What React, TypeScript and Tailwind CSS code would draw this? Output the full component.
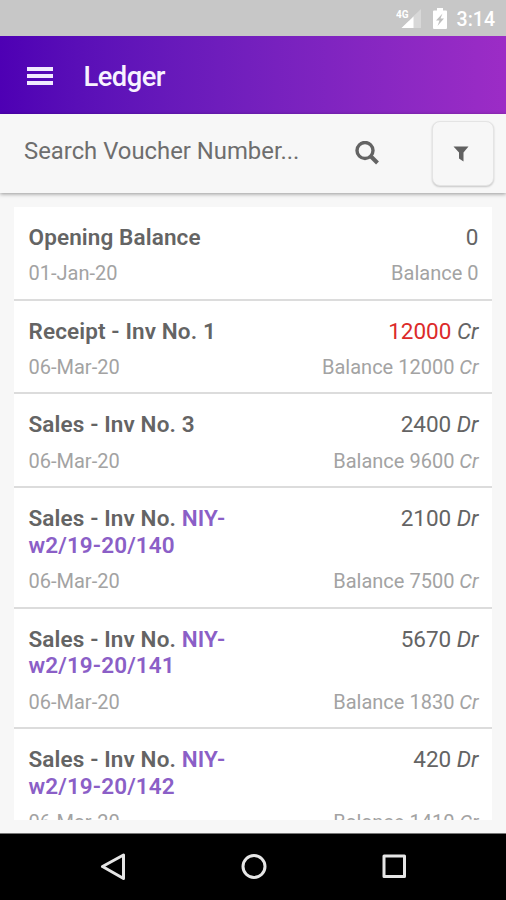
type Entry = {
  title: string;
  voucher?: string;
  date: string;
  amount: string;
  type?: string;
  credit?: boolean;
  balance: string;
  balanceType?: string;
};

const entries: Entry[] = [
  { title: "Opening Balance", date: "01-Jan-20", amount: "0", balance: "0" },
  {
    title: "Receipt - Inv No. 1",
    date: "06-Mar-20",
    amount: "12000",
    type: "Cr",
    credit: true,
    balance: "12000",
    balanceType: "Cr",
  },
  {
    title: "Sales - Inv No. 3",
    date: "06-Mar-20",
    amount: "2400",
    type: "Dr",
    balance: "9600",
    balanceType: "Cr",
  },
  {
    title: "Sales - Inv No.",
    voucher: "NIY-w2/19-20/140",
    date: "06-Mar-20",
    amount: "2100",
    type: "Dr",
    balance: "7500",
    balanceType: "Cr",
  },
  {
    title: "Sales - Inv No.",
    voucher: "NIY-w2/19-20/141",
    date: "06-Mar-20",
    amount: "5670",
    type: "Dr",
    balance: "1830",
    balanceType: "Cr",
  },
  {
    title: "Sales - Inv No.",
    voucher: "NIY-w2/19-20/142",
    date: "06-Mar-20",
    amount: "420",
    type: "Dr",
    balance: "1410",
    balanceType: "Cr",
  },
];

function StatusBar() {
  return (
    <div className="flex h-9 shrink-0 items-center justify-end bg-[#c7c7c7] pt-[2px] pr-[11px] text-white">
      <svg width="26" height="22" viewBox="0 0 26 22" className="mr-[11px]">
        <path d="M25 1v19H5.500l7-7h4V9z" fill="#fff" opacity="0.3" />
        <path d="M17.500 8.500V20H5.500z" fill="#fff" />
        <text x="0" y="9.500" fontSize="10" fontWeight="700" fill="#fff" fontFamily="Roboto, sans-serif">
          4G
        </text>
      </svg>
      <svg width="14" height="22" viewBox="0 0 14 22" className="mr-[10px]">
        <path d="M4 0h6v2.500h3a1 1 0 0 1 1 1V20a1 1 0 0 1-1 1H1a1 1 0 0 1-1-1V3.500a1 1 0 0 1 1-1h3z" fill="#fff" />
        <path d="M9.500 5.500L3 12.500h3.500L4.500 18l6.500-7.500H7.500z" fill="#c0c0c0" />
      </svg>
      <span className="pt-px text-[19.500px] leading-none font-medium">3:14</span>
    </div>
  );
}

function Header() {
  return (
    <header className="flex h-[78px] shrink-0 items-center bg-linear-to-r from-[#4e00b4] to-[#9c2cc6] pl-[27px]">
      <div className="flex w-[26px] flex-col gap-[3px] pt-px">
        <span className="h-[4px] bg-[#f1eaff]" />
        <span className="h-[4px] bg-[#f1eaff]" />
        <span className="h-[4px] bg-[#f1eaff]" />
      </div>
      <h1 className="ml-[30.500px] pt-[4px] text-[27.300px] tracking-[-0.500px] font-medium text-[#f8f2ff]">Ledger</h1>
    </header>
  );
}

function SearchBar() {
  return (
    <div className="z-10 flex h-[79px] shrink-0 items-center bg-[#f7f7f7] pr-[12px] pl-6 shadow-[0_1px_4px_rgba(0,0,0,0.4)]">
      <span className="flex-1 pb-1 text-[23.850px] text-[#6e6e6e]">Search Voucher Number...</span>
      <svg width="24" height="24" viewBox="0 0 24 24" fill="none" className="mr-[53px] mb-[2px]">
        <circle cx="10" cy="9.500" r="8" stroke="#646464" strokeWidth="3.400" />
        <path d="M15.500 15L22.500 22" stroke="#646464" strokeWidth="4" />
      </svg>
      <button className="flex h-[65px] w-[62px] items-center justify-center rounded-[8px] border border-[#e4e4e4] bg-[#f7f7f7] shadow-[0_1px_2px_rgba(0,0,0,0.2)]">
        <svg width="16" height="16" viewBox="0 0 16 16" className="mr-[4px]">
          <path d="M0.500 0.500h15L10.500 6.500v9L6 12.500V6.500z" fill="#616161" />
        </svg>
      </button>
    </div>
  );
}

function LedgerRow({ entry }: { entry: Entry }) {
  return (
    <div className="border-b-2 border-[#dcdcdc] pt-[17px] pr-[13.500px] pb-[13.400px] pl-[14.500px]">
      <div className="flex items-start justify-between text-[22.500px] leading-[26.800px] text-[#646464]">
        <div className="max-w-[230px] font-semibold tracking-[0.120px]">
          {entry.title} {entry.voucher && <span className="text-[#8b5fc7]">{entry.voucher}</span>}
        </div>
        <div>
          <span className={entry.credit ? "text-[#dc2a2a]" : ""}>{entry.amount}</span>
          {entry.type && <i> {entry.type}</i>}
        </div>
      </div>
      <div className="mt-[10.500px] flex justify-between text-[20px] leading-6 text-[#a3a3a3]">
        <span>{entry.date}</span>
        <span>
          Balance {entry.balance}
          {entry.balanceType && <i> {entry.balanceType}</i>}
        </span>
      </div>
    </div>
  );
}

function NavBar() {
  return (
    <nav className="flex h-[67px] shrink-0 items-center justify-between border-t border-[#777777] bg-black pr-[98px] pl-[99px]">
      <svg width="28" height="28" viewBox="0 0 28 28" fill="none" stroke="#e6e6e6" strokeWidth="3" strokeLinejoin="round">
        <path d="M24.500 2v23.500L3.500 13.500z" />
      </svg>
      <svg width="28" height="28" viewBox="0 0 28 28" fill="none" stroke="#e6e6e6" strokeWidth="3">
        <circle cx="14" cy="13.500" r="11" />
      </svg>
      <svg width="28" height="28" viewBox="0 0 28 28" fill="none" stroke="#e6e6e6" strokeWidth="3" strokeLinejoin="round">
        <rect x="4" y="3" width="20.500" height="20.500" />
      </svg>
    </nav>
  );
}

export default function App() {
  return (
    <div className="flex h-[900px] w-[506px] flex-col overflow-hidden bg-[#f7f7f7] font-[Roboto,sans-serif]">
      <StatusBar />
      <Header />
      <SearchBar />
      <main className="min-h-0 flex-1 px-[14px] pt-[14px] pb-[13.500px]">
        <div className="h-full overflow-hidden bg-white">
          {entries.map((entry, index) => (
            <LedgerRow key={index} entry={entry} />
          ))}
        </div>
      </main>
      <NavBar />
    </div>
  );
}
